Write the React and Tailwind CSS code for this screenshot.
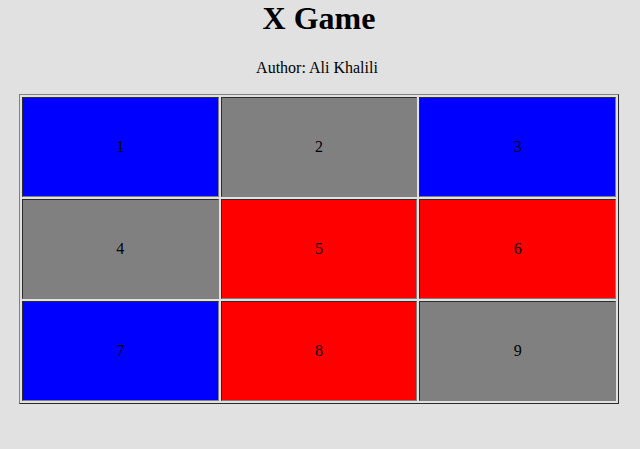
const rows = [
  [
    { n: 1, color: "bg-[#0000ff]" },
    { n: 2, color: "bg-[#808080]" },
    { n: 3, color: "bg-[#0000ff]" },
  ],
  [
    { n: 4, color: "bg-[#808080]" },
    { n: 5, color: "bg-[#ff0000]" },
    { n: 6, color: "bg-[#ff0000]" },
  ],
  [
    { n: 7, color: "bg-[#0000ff]" },
    { n: 8, color: "bg-[#ff0000]" },
    { n: 9, color: "bg-[#808080]" },
  ],
];

export default function App() {
  return (
    <main className="flex min-h-screen flex-col items-center bg-[#e1e1e1] pr-[21px] pl-[19px] text-center font-['Liberation_Serif',serif] text-base text-black">
      <h1 className="text-[32px] leading-9 font-bold">X Game</h1>
      <p className="mt-[23px] mb-[17px] pr-1 leading-[18px]">Author: Ali Khalili</p>
      <table className="w-full max-w-[600px] table-fixed border-separate border-spacing-[2px] border border-[#808080] border-r-[#2c2c2c] border-b-[#2c2c2c]">
        <tbody>
          {rows.map((row) => (
            <tr key={row[0].n}>
              {row.map(({ n, color }) => (
                <td
                  key={n}
                  className={`h-[100px] border border-[#2c2c2c] border-r-[#808080] border-b-[#808080] p-px align-middle ${color}`}
                >
                  {n}
                </td>
              ))}
            </tr>
          ))}
        </tbody>
      </table>
    </main>
  );
}
